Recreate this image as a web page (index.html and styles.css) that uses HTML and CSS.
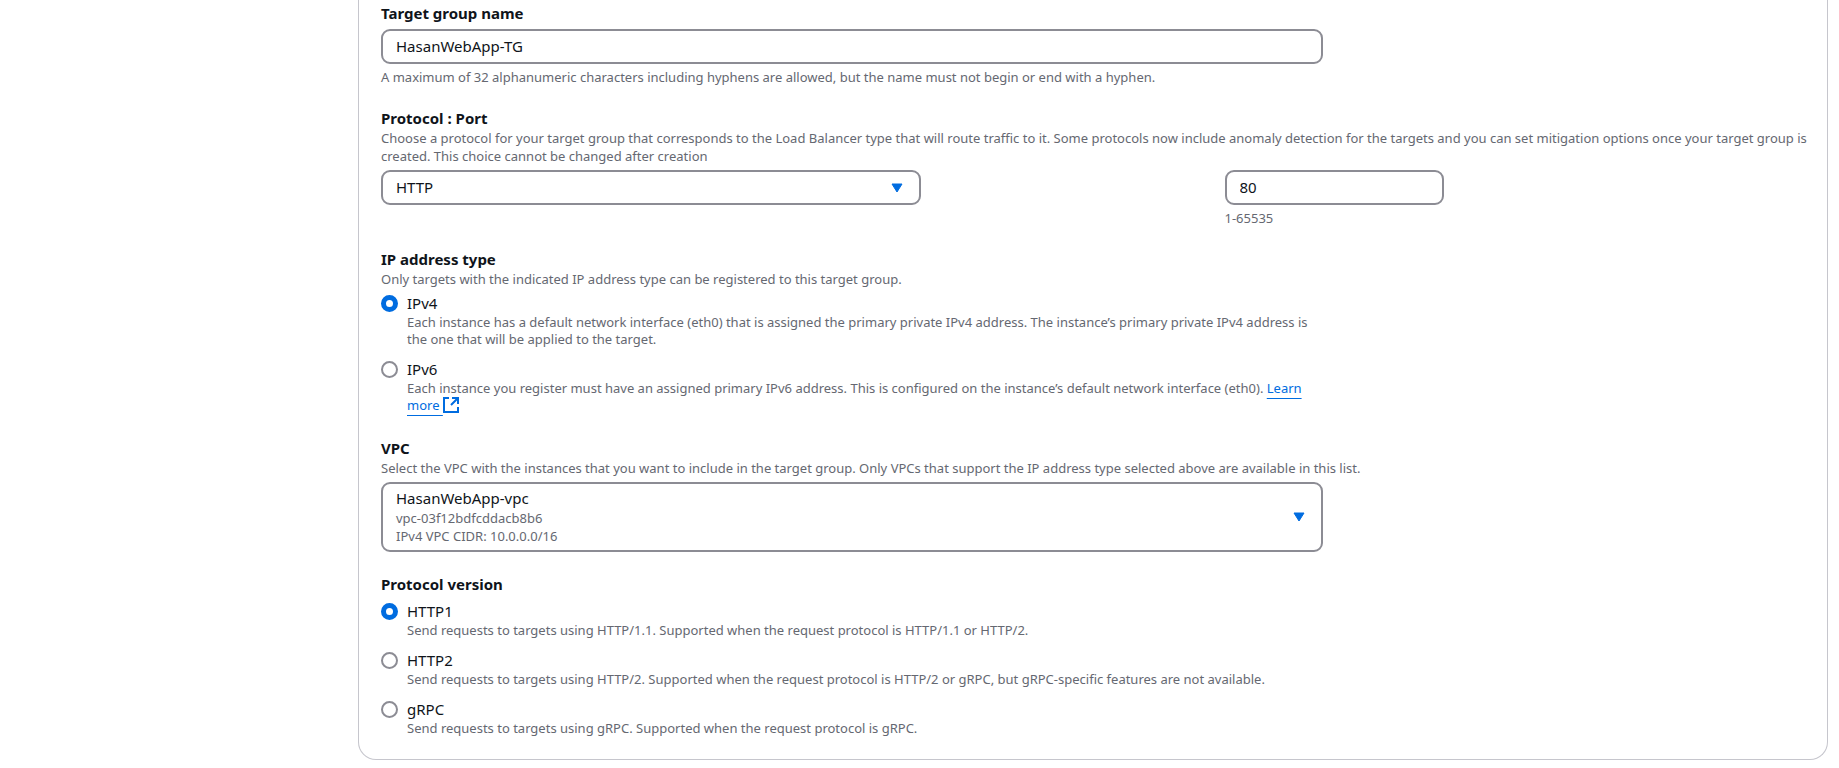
FILE: index.html
```html
<!DOCTYPE html>
<html lang="en">
<head>
    <meta charset="UTF-8">
    <meta name="viewport" content="width=device-width, initial-scale=1.0">
    <title>Create target group</title>
    <link rel="stylesheet" href="styles.css">
</head>
<body>
    <main class="page">
        <form class="card">
            <div class="field">
                <label class="label" for="name">Target group name</label>
                <div class="columns">
                    <input class="input" type="text" id="name" value="HasanWebApp-TG" aria-describedby="name-hint">
                </div>
                <p class="hint" id="name-hint">A maximum of 32 alphanumeric characters including hyphens are allowed, but the name must not begin or end with a hyphen.</p>
            </div>

            <div class="field" role="group" aria-labelledby="protocol-title">
                <label class="label" id="protocol-title" for="protocol">Protocol : Port</label>
                <p class="description">Choose a protocol for your target group that corresponds to the Load Balancer type that will route traffic to it. Some protocols now include anomaly detection for the targets and you can set mitigation options once your target group is created. This choice cannot be changed after creation</p>
                <div class="port-row">
                    <div class="columns protocol">
                        <div class="select">
                            <select class="input" id="protocol">
                                <option>HTTP</option>
                            </select>
                            <svg class="caret" viewBox="0 0 12 10" aria-hidden="true"><path d="M1 1h10L6 9z"/></svg>
                        </div>
                    </div>
                    <div class="port">
                        <input class="input" type="text" inputmode="numeric" id="port" value="80" aria-label="Port" aria-describedby="port-hint">
                        <p class="hint" id="port-hint">1-65535</p>
                    </div>
                </div>
            </div>

            <fieldset class="field">
                <legend class="label">IP address type</legend>
                <p class="description">Only targets with the indicated IP address type can be registered to this target group.</p>
                <div class="columns">
                    <div class="radios">
                        <div class="radio">
                            <input type="radio" name="ip" id="ipv4" checked>
                            <label for="ipv4">IPv4</label>
                            <p class="description">Each instance has a default network interface (eth0) that is assigned the primary private IPv4 address. The instance’s primary private IPv4 address is the one that will be applied to the target.</p>
                        </div>
                        <div class="radio">
                            <input type="radio" name="ip" id="ipv6">
                            <label for="ipv6">IPv6</label>
                            <p class="description">Each instance you register must have an assigned primary IPv6 address. This is configured on the instance’s default network interface (eth0). <a class="link" href="#">Learn more <svg class="external" viewBox="0 0 16 16" aria-label="Opens in a new tab"><path d="M6 1H1v14h14v-5M9 1h6v6M15 1 8 8"/></svg></a></p>
                        </div>
                    </div>
                </div>
            </fieldset>

            <div class="field">
                <label class="label" for="vpc">VPC</label>
                <p class="description">Select the VPC with the instances that you want to include in the target group. Only VPCs that support the IP address type selected above are available in this list.</p>
                <div class="columns">
                    <div class="select">
                        <select class="input tall" id="vpc" aria-describedby="vpc-details">
                            <option>HasanWebApp-vpc</option>
                        </select>
                        <div class="details" id="vpc-details">
                            <p>vpc-03f12bdfcddacb8b6</p>
                            <p>IPv4 VPC CIDR: 10.0.0.0/16</p>
                        </div>
                        <svg class="caret" viewBox="0 0 12 10" aria-hidden="true"><path d="M1 1h10L6 9z"/></svg>
                    </div>
                </div>
            </div>

            <fieldset class="field">
                <legend class="label">Protocol version</legend>
                <div class="radios">
                    <div class="radio">
                        <input type="radio" name="version" id="http1" checked>
                        <label for="http1">HTTP1</label>
                        <p class="description">Send requests to targets using HTTP/1.1. Supported when the request protocol is HTTP/1.1 or HTTP/2.</p>
                    </div>
                    <div class="radio">
                        <input type="radio" name="version" id="http2">
                        <label for="http2">HTTP2</label>
                        <p class="description">Send requests to targets using HTTP/2. Supported when the request protocol is HTTP/2 or gRPC, but gRPC-specific features are not available.</p>
                    </div>
                    <div class="radio">
                        <input type="radio" name="version" id="grpc">
                        <label for="grpc">gRPC</label>
                        <p class="description">Send requests to targets using gRPC. Supported when the request protocol is gRPC.</p>
                    </div>
                </div>
            </fieldset>
        </form>
    </main>
</body>
</html>
```
FILE: styles.css
```css
* {
    box-sizing: border-box;
}

body {
    margin: 0;
    background: #fff;
    color: #0f141a;
    font-family: "Noto Sans", sans-serif;
    font-size: 15px;
    line-height: 20px;
}

p {
    margin: 0;
}

.page {
    padding: 0 11px 8px 358px;
}

.card {
    display: flex;
    flex-direction: column;
    gap: 22px;
    padding: 3px 22px 20px;
    border: 1px solid #c6c6cd;
    border-top: 0;
    border-radius: 0 0 18px 18px;
}

.field {
    min-width: 0;
    margin: 0;
    padding: 0;
    border: 0;
}

.label {
    display: block;
    padding: 0;
    font-weight: 700;
}

.description,
.hint,
.details {
    color: #656871;
    font-size: 13px;
    line-height: 18px;
}

.description {
    margin-top: 1px;
}

/* intro texts may run a little into the card padding */
.field > .description {
    margin-right: -8px;
}

.hint {
    margin-top: 4px;
}

.columns {
    display: grid;
    grid-template-columns: repeat(3, 1fr);
    gap: 22px;
    margin-top: 5px;
}

.columns > * {
    grid-column: span 2;
}

.label + .columns {
    margin-top: 6px;
}

.port-row {
    display: grid;
    grid-template-columns: repeat(12, 1fr);
    column-gap: 22px;
    margin-top: 5px;
}

.protocol {
    grid-column: 1 / 8;
    align-items: start;
    margin-top: 0;
}

.port {
    grid-column: 8 / 10;
}

.input {
    width: 100%;
    height: 35px;
    padding: 0 13px 2px;
    border: 2px solid #8c8c94;
    border-radius: 9px;
    background: #fff;
    color: inherit;
    font: inherit;
    appearance: none;
}

/* the select, its details and the caret share one grid cell */
.select {
    display: grid;
}

.select > * {
    grid-area: 1 / 1;
}

.tall {
    height: 70px;
    padding-bottom: 38px;
}

.details {
    align-self: end;
    padding: 0 15px 7px;
    pointer-events: none;
}

.caret {
    align-self: center;
    justify-self: end;
    width: 12px;
    height: 10px;
    margin-right: 18px;
    fill: #006ce0;
    stroke: #006ce0;
    stroke-linejoin: round;
    pointer-events: none;
}

.radios {
    display: flex;
    flex-direction: column;
    gap: 11px;
    padding-bottom: 2px;
}

.label + .radios {
    margin-top: 7px;
}

.radio {
    display: grid;
    grid-template-columns: 17px 1fr;
    column-gap: 9px;
    align-items: center;
}

.radio input {
    width: 17px;
    height: 17px;
    margin: 0;
    border: 2px solid #8c8c94;
    border-radius: 50%;
    background: #fff;
    appearance: none;
}

.radio input:checked {
    border: 5px solid #006ce0;
}

.radio .description {
    grid-column: 2;
    line-height: 17px;
}

.link {
    color: #006ce0;
    text-decoration: underline;
    text-underline-offset: 5px;
}

.external {
    width: 16px;
    height: 16px;
    vertical-align: -3px;
    fill: none;
    stroke: #006ce0;
    stroke-width: 2;
}
```
